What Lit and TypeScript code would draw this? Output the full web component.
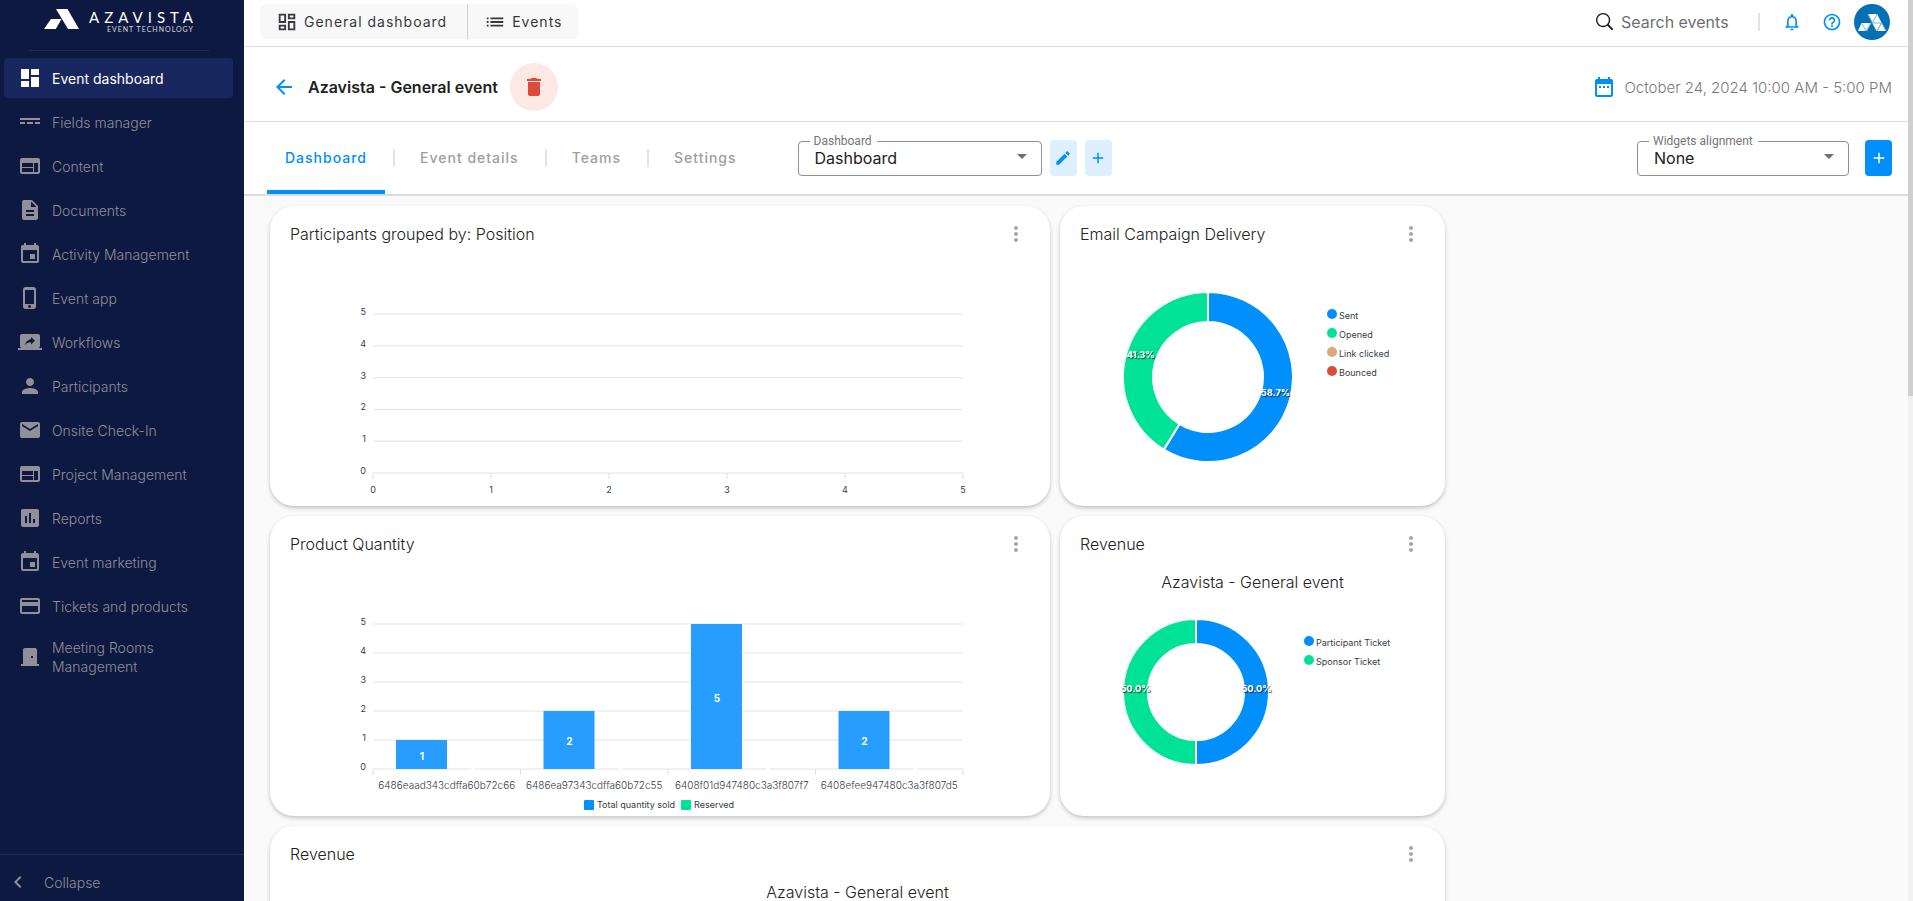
import { LitElement, html, svg, css, nothing } from "lit";
import { customElement, property } from "lit/decorators.js";
import { classMap } from "lit/directives/class-map.js";

const ICONS: Record<string, string> = {
  dashboard: "M3 13h8V3H3v10zm0 8h8v-6H3v6zm10 0h8V11h-8v10zm0-18v6h8V3h-8z",
  dashboardOutline:
    "M19 5v2h-4V5h4M9 5v6H5V5h4m10 8v6h-4v-6h4M9 17v2H5v-2h4M21 3h-8v6h8V3zM11 3H3v10h8V3zm10 8h-8v10h8V11zm-10 4H3v6h8v-6z",
  list: "M3 13h2v-2H3v2zm0 4h2v-2H3v2zm0-8h2V7H3v2zm4 4h14v-2H7v2zm0 4h14v-2H7v2zM7 7v2h14V7H7z",
  fields: "M2 8h20v2H2zM2 12h5v2H2zM9 12h6v2H9zM17 12h5v2h-5z",
  web: "M20 4H4c-1.1 0-1.99.9-1.99 2L2 18c0 1.1.9 2 2 2h16c1.1 0 2-.9 2-2V6c0-1.1-.9-2-2-2zm-5 14H4v-4h11v4zm0-5H4V9h11v4zm5 5h-4V9h4v9z",
  document:
    "M14 2H6c-1.1 0-1.99.9-1.99 2L4 20c0 1.1.89 2 1.99 2H18c1.1 0 2-.9 2-2V8l-6-6zm2 16H8v-2h8v2zm0-4H8v-2h8v2zm-3-5V3.5L18.5 9H13z",
  event:
    "M17 12h-5v5h5v-5zM16 1v2H8V1H6v2H5c-1.11 0-1.99.9-1.99 2L3 19c0 1.1.89 2 2 2h14c1.1 0 2-.9 2-2V5c0-1.1-.9-2-2-2h-1V1h-2zm3 18H5V8h14v11z",
  phone:
    "M15.5 1h-8C6.12 1 5 2.12 5 3.5v17C5 21.88 6.12 23 7.5 23h8c1.38 0 2.5-1.12 2.5-2.5v-17C18 2.12 16.88 1 15.5 1zm-4 21c-.83 0-1.5-.67-1.5-1.5s.67-1.5 1.5-1.5 1.5.67 1.5 1.5-.67 1.5-1.5 1.5zm4.5-4H7V4h9v14z",
  share:
    "M20 18c1.1 0 1.99-.9 1.99-2L22 6c0-1.11-.9-2-2-2H4c-1.11 0-2 .89-2 2v10c0 1.1.89 2 2 2H0v2h24v-2h-4zm-7-3.53v-2.19c-2.78 0-4.61.85-6 2.72.56-2.67 2.11-5.33 6-5.87V7l4 3.73-4 3.74z",
  person:
    "M12 12c2.21 0 4-1.79 4-4s-1.79-4-4-4-4 1.79-4 4 1.79 4 4 4zm0 2c-2.67 0-8 1.34-8 4v2h16v-2c0-2.66-5.33-4-8-4z",
  mail: "M20 4H4c-1.1 0-1.99.9-1.99 2L2 18c0 1.1.9 2 2 2h16c1.1 0 2-.9 2-2V6c0-1.1-.9-2-2-2zm0 4l-8 5-8-5V6l8 5 8-5v2z",
  report:
    "M19 3H5c-1.1 0-2 .9-2 2v14c0 1.1.9 2 2 2h14c1.1 0 2-.9 2-2V5c0-1.1-.9-2-2-2zM9 17H7v-7h2v7zm4 0h-2V7h2v10zm4 0h-2v-4h2v4z",
  card: "M20 4H4c-1.11 0-1.99.89-1.99 2L2 18c0 1.11.89 2 2 2h16c1.11 0 2-.89 2-2V6c0-1.11-.89-2-2-2zm0 14H4v-6h16v6zm0-10H4V6h16v2z",
  door: "M19 19V5c0-1.1-.9-2-2-2H7c-1.1 0-2 .9-2 2v14H3v2h18v-2h-2zm-4-6h-2v-2h2v2z",
  bell: "M12 22c1.1 0 2-.9 2-2h-4c0 1.1.9 2 2 2zm6-6v-5c0-3.07-1.63-5.64-4.5-6.32V4c0-.83-.67-1.5-1.5-1.5s-1.5.67-1.5 1.5v.68C7.64 5.36 6 7.92 6 11v5l-2 2v1h16v-1l-2-2zm-2 1H8v-6c0-2.48 1.51-4.5 4-4.5s4 2.02 4 4.5v6z",
  help: "M11 18h2v-2h-2v2zm1-16C6.48 2 2 6.48 2 12s4.48 10 10 10 10-4.48 10-10S17.52 2 12 2zm0 18c-4.41 0-8-3.59-8-8s3.59-8 8-8 8 3.59 8 8-3.59 8-8 8zm0-14c-2.21 0-4 1.79-4 4h2c0-1.1.9-2 2-2s2 .9 2 2c0 2-3 1.75-3 5h2c0-2.25 3-2.5 3-5 0-2.21-1.79-4-4-4z",
  calendar:
    "M9 11H7v2h2v-2zm4 0h-2v2h2v-2zm4 0h-2v2h2v-2zm2-7h-1V2h-2v2H8V2H6v2H5c-1.11 0-1.99.9-1.99 2L3 20c0 1.1.89 2 2 2h14c1.1 0 2-.9 2-2V6c0-1.1-.9-2-2-2zm0 16H5V9h14v11z",
  trash: "M6 19c0 1.1.9 2 2 2h8c1.1 0 2-.9 2-2V7H6v12zM19 4h-3.5l-1-1h-5l-1 1H5v2h14V4z",
  back: "M20 11H7.83l5.59-5.59L12 4l-8 8 8 8 1.41-1.41L7.83 13H20v-2z",
  edit: "M3 17.25V21h3.75L17.81 9.94l-3.75-3.75L3 17.25zM20.71 7.04c.39-.39.39-1.02 0-1.41l-2.34-2.34c-.39-.39-1.02-.39-1.41 0l-1.83 1.83 3.75 3.75 1.83-1.83z",
  plus: "M19 13h-6v6h-2v-6H5v-2h6V5h2v6h6v2z",
  chevron: "M15.41 7.41L14 6l-6 6 6 6 1.41-1.41L10.83 12z",
  more: "M12 8c1.1 0 2-.9 2-2s-.9-2-2-2-2 .9-2 2 .9 2 2 2zm0 2c-1.1 0-2 .9-2 2s.9 2 2 2 2-.9 2-2-.9-2-2-2zm0 6c-1.1 0-2 .9-2 2s.9 2 2 2 2-.9 2-2-.9-2-2-2z",
  search:
    "M7.5 0a7.5 7.5 0 1 0 4.55 13.46l4.6 4.6a1 1 0 0 0 1.41-1.41l-4.6-4.6A7.5 7.5 0 0 0 7.5 0zm0 1.4a6.1 6.1 0 1 1 0 12.2 6.1 6.1 0 0 1 0-12.2z",
};

const icon = (name: string, size = 24, box = 24) => html`
  <svg class="icon" width=${size} height=${size} viewBox="0 0 ${box} ${box}" aria-hidden="true">
    <path d=${ICONS[name]} fill="currentColor"></path>
  </svg>
`;

const reset = css`
  * {
    box-sizing: border-box;
  }
  button,
  input,
  select {
    font: inherit;
    color: inherit;
    margin: 0;
    padding: 0;
    border: 0;
    background: none;
  }
  a {
    color: inherit;
    text-decoration: none;
  }
  .icon {
    display: block;
    flex: none;
  }
`;

@customElement("app-sidebar")
export class AppSidebar extends LitElement {
  private items = [
    { icon: "dashboard", label: "Event dashboard", active: true },
    { icon: "fields", label: "Fields manager" },
    { icon: "web", label: "Content" },
    { icon: "document", label: "Documents" },
    { icon: "event", label: "Activity Management" },
    { icon: "phone", label: "Event app" },
    { icon: "share", label: "Workflows" },
    { icon: "person", label: "Participants" },
    { icon: "mail", label: "Onsite Check-In" },
    { icon: "web", label: "Project Management" },
    { icon: "report", label: "Reports" },
    { icon: "event", label: "Event marketing" },
    { icon: "card", label: "Tickets and products" },
    { icon: "door", label: "Meeting Rooms Management" },
  ];

  static styles = [
    reset,
    css`
      :host {
        display: flex;
        flex-direction: column;
        background: #0e1941;
        color: #8f9098;
        font-size: 14px;
        line-height: 19px;
        font-weight: 300;
      }
      .brand {
        display: flex;
        align-items: center;
        gap: 10px;
        height: 51px;
        margin: 0 35px 0 29px;
        padding: 0 15px 12px;
        border-bottom: 1px solid #1f2b57;
        color: #fff;
      }
      .words {
        display: flex;
        flex-direction: column;
        align-items: flex-end;
        font-family: Lato, sans-serif;
        padding-top: 4px;
      }
      .name {
        font-size: 15px;
        line-height: 15px;
        letter-spacing: 5px;
        margin-right: -5px;
        font-weight: 400;
      }
      .tag {
        font-size: 7px;
        line-height: 8px;
        letter-spacing: 1px;
        margin-right: -1px;
        font-weight: 400;
        opacity: 0.8;
      }
      nav {
        flex: 1;
        display: flex;
        flex-direction: column;
        gap: 4px;
        padding: 7px 11px 0 4px;
      }
      .item {
        display: flex;
        align-items: center;
        gap: 10px;
        min-height: 40px;
        padding: 8px 60px 8px 14px;
        border-radius: 4px;
      }
      .label {
        min-width: 0;
      }
      .item:not(.last) .label {
        white-space: nowrap;
      }
      .active {
        background: #18285f;
        color: #fff;
        font-weight: 400;
      }
      .collapse {
        display: flex;
        align-items: center;
        gap: 14px;
        height: 47px;
        padding: 8px 6px 0;
        border-top: 1px solid #1f2b57;
        text-align: left;
      }
    `,
  ];

  render() {
    return html`
      <div class="brand">
        <svg class="icon" width="35" height="20" viewBox="0 0 35 20" aria-hidden="true">
          <path d="M12 0h11.500l11.500 20h-11z" fill="#fff"></path>
          <path d="M7 10h10.500l-5.700 10H0z" fill="#fff"></path>
        </svg>
        <div class="words">
          <span class="name">AZAVISTA</span>
          <span class="tag">EVENT TECHNOLOGY</span>
        </div>
      </div>
      <nav>
        ${this.items.map(
          (item, i) => html`
            <a
              href="#"
              class=${classMap({ item: true, active: !!item.active, last: i === this.items.length - 1 })}
            >
              ${icon(item.icon)}<span class="label">${item.label}</span>
            </a>
          `,
        )}
      </nav>
      <button class="collapse" type="button">${icon("chevron")}<span>Collapse</span></button>
    `;
  }
}

@customElement("outlined-select")
export class OutlinedSelect extends LitElement {
  @property() label = "";
  @property() value = "";

  static styles = [
    reset,
    css`
      :host {
        display: block;
        position: relative;
      }
      label {
        position: absolute;
        top: -7px;
        left: 12px;
        padding: 0 5px 0 4px;
        background: #fff;
        color: #757575;
        font-family: Roboto, sans-serif;
        font-size: 12px;
        line-height: 14px;
        white-space: nowrap;
      }
      select {
        display: block;
        appearance: none;
        width: 100%;
        height: 35px;
        padding: 0 32px 0 16px;
        border: 1px solid #8f8f8f;
        border-radius: 4px;
        color: #212121;
        font-size: 16px;
      }
      .caret {
        position: absolute;
        top: 13px;
        right: 15px;
        pointer-events: none;
      }
    `,
  ];

  render() {
    return html`
      <select id="field">
        <option>${this.value}</option>
      </select>
      <label for="field">${this.label}</label>
      <svg class="caret" width="10" height="5" viewBox="0 0 10 5" aria-hidden="true">
        <path d="M0 0h10L5 5z" fill="#6f6f6f"></path>
      </svg>
    `;
  }
}

@customElement("widget-card")
export class WidgetCard extends LitElement {
  @property() heading = "";
  @property() caption = "";

  static styles = [
    reset,
    css`
      :host {
        display: flex;
        flex-direction: column;
        min-width: 0;
        background: #fff;
        border-radius: 24px;
        box-shadow: 0 2px 4px rgba(0, 0, 0, 0.22);
        color: #212121;
        font-size: 16px;
        font-weight: 300;
      }
      header {
        display: flex;
        align-items: center;
        justify-content: space-between;
        flex: none;
        height: 56px;
        padding: 0 22px 0 20px;
      }
      h2,
      h3 {
        margin: 0;
        font: inherit;
        line-height: 20px;
      }
      h3 {
        text-align: center;
      }
      .more {
        color: #a6a6a6;
      }
      .body {
        flex: 1;
        min-height: 0;
      }
    `,
  ];

  render() {
    return html`
      <header>
        <h2>${this.heading}</h2>
        <button class="more" type="button" aria-label="Widget menu">${icon("more")}</button>
      </header>
      ${this.caption ? html`<h3>${this.caption}</h3>` : nothing}
      <div class="body"><slot></slot></div>
    `;
  }
}

const chartStyles = css`
  :host {
    display: block;
    height: 100%;
  }
  svg {
    display: block;
    width: 100%;
    height: 100%;
  }
  .axis,
  .legend {
    font-size: 9px;
    font-weight: 400;
    fill: #373d3f;
  }
  .category {
    font-size: 10px;
    fill: #373d3f;
  }
  .value {
    font-size: 10px;
    font-weight: 700;
    fill: #fff;
    text-anchor: middle;
  }
  .percent {
    font-size: 9px;
    font-weight: 800;
    fill: #fff;
    text-anchor: middle;
    text-shadow: 1px 1px 1px rgba(0, 0, 0, 0.7);
  }
  .end {
    text-anchor: end;
  }
  .middle {
    text-anchor: middle;
  }
`;

const PLOT = { left: 103, right: 693 };

@customElement("column-chart")
export class ColumnChart extends LitElement {
  @property({ type: Array }) ticks: string[] = [];
  @property({ type: Array }) categories: string[] = [];
  @property({ type: Array }) values: number[] = [];
  @property({ type: Array }) series: { label: string; color: string; x: number }[] = [];
  @property({ type: Number }) base = 211;
  @property({ type: Number }) top = 52;

  static styles = chartStyles;

  render() {
    const { left, right } = PLOT;
    const step = (this.base - this.top) / 5;
    const slots = this.categories.length || this.ticks.length - 1;
    const slot = (right - left) / slots;
    return html`
      <svg viewBox="0 0 780 244" role="img" aria-label="Column chart">
        ${[0, 1, 2, 3, 4, 5].map((n) => {
          const y = this.base - n * step;
          return svg`
            <line x1=${left} x2=${right} y1=${y} y2=${y} stroke="#e3e3e3" stroke-width="1"></line>
            <text class="axis end" x="96" y=${y + 1}>${n}</text>`;
        })}
        ${Array.from({ length: slots + 1 }, (_, i) => {
          const x = left + i * slot;
          return svg`<line x1=${x} x2=${x} y1=${this.base} y2=${this.base + 6} stroke="#e0e0e0"></line>`;
        })}
        ${this.ticks.map(
          (t, i) => svg`<text class="axis middle" x=${left + i * slot} y=${this.base + 20}>${t}</text>`,
        )}
        ${this.categories.map((c, i) => {
          const x = left + i * slot + 23;
          const h = this.values[i] * step;
          return svg`
            <rect x=${x} y=${this.base - h} width="51" height=${h} fill="#269dff"></rect>
            <ellipse cx=${x + 77} cy=${this.base} rx="2" ry="1" fill="#fff"></ellipse>
            <text class="value" x=${x + 26} y=${this.base - h / 2 + 5}>${this.values[i]}</text>
            <text class="category middle" x=${left + (i + 0.5) * slot} y=${this.base + 20}>${c}</text>`;
        })}
        ${this.series.map(
          (s) => svg`
            <rect x=${s.x} y="228" width="10" height="10" rx="1" fill=${s.color}></rect>
            <text class="legend" x=${s.x + 13} y="236">${s.label}</text>`,
        )}
      </svg>
    `;
  }
}

@customElement("donut-chart")
export class DonutChart extends LitElement {
  @property({ type: Array }) slices: { share: number; color: string }[] = [];
  @property({ type: Array }) legend: { label: string; color: string }[] = [];
  @property({ type: Number }) height = 244;
  @property({ type: Number }) cx = 148;
  @property({ type: Number }) cy = 115;
  @property({ type: Number }) radius = 85;
  @property({ type: Number }) hole = 55;
  @property({ type: Number }) legendX = 272;

  static styles = chartStyles;

  private point(angle: number, r: number) {
    const a = ((angle - 90) * Math.PI) / 180;
    return [this.cx + r * Math.cos(a), this.cy + r * Math.sin(a)];
  }

  render() {
    let start = 0;
    const parts = this.slices.map((s) => {
      const from = start;
      const to = start + s.share * 3.6;
      start = to;
      const large = to - from > 180 ? 1 : 0;
      const [ax, ay] = this.point(from, this.radius);
      const [bx, by] = this.point(to, this.radius);
      const [dx, dy] = this.point(to, this.hole);
      const [ex, ey] = this.point(from, this.hole);
      const [tx, ty] = this.point((from + to) / 2, (this.radius + this.hole) / 2);
      return {
        ...s,
        tx,
        ty,
        d: `M${ax} ${ay}A${this.radius} ${this.radius} 0 ${large} 1 ${bx} ${by}L${dx} ${dy}A${this.hole} ${this.hole} 0 ${large} 0 ${ex} ${ey}Z`,
      };
    });
    return html`
      <svg viewBox="0 0 385 ${this.height}" role="img" aria-label="Donut chart">
        ${parts.map((p) => svg`<path d=${p.d} fill=${p.color} stroke="#fff" stroke-width="2"></path>`)}
        ${parts.map((p) => svg`<text class="percent" x=${p.tx} y=${p.ty}>${p.share.toFixed(1)}%</text>`)}
        ${this.legend.map((l, i) => {
          const y = this.cy - this.radius + 22 + i * 19;
          return svg`
            <circle cx=${this.legendX} cy=${y} r="5" fill=${l.color}></circle>
            <text class="legend" x=${this.legendX + 7} y=${y + 5}>${l.label}</text>`;
        })}
      </svg>
    `;
  }
}

@customElement("app-root")
export class AppRoot extends LitElement {
  static styles = [
    reset,
    css`
      :host {
        display: grid;
        grid-template-columns: 244px minmax(0, 1fr) 5px;
        height: 100vh;
        overflow: hidden;
        background: #fafafa;
        color: #212121;
        font-family: Inter, "Liberation Sans", sans-serif;
        font-size: 16px;
      }
      main {
        display: flex;
        flex-direction: column;
        min-width: 0;
        min-height: 0;
      }
      .bar {
        display: flex;
        align-items: center;
        justify-content: space-between;
        flex: none;
        padding: 0 16px;
        background: #fff;
        border-bottom: 1px solid #dcdcdc;
      }
      .group {
        display: flex;
        align-items: center;
      }
      .grow {
        flex: 1;
      }
      .top {
        height: 47px;
        padding: 0 18px 3px 16px;
      }
      .switch {
        display: flex;
        height: 35px;
        background: #f8f8f8;
        border-radius: 6px;
        overflow: hidden;
        font-size: 14px;
        letter-spacing: 1px;
        color: #37383c;
      }
      .switch a {
        display: flex;
        align-items: center;
        gap: 6px;
        padding: 0 20px 0 16px;
      }
      .switch a + a {
        border-left: 1px solid #cfcfcf;
        padding-right: 16px;
      }
      .search {
        display: flex;
        align-items: center;
        gap: 8px;
      }
      .search .icon {
        color: #17182b;
      }
      .search input {
        width: 137px;
        outline: 0;
      }
      .search input::placeholder {
        color: #6f6f6f;
        opacity: 1;
      }
      .rule {
        width: 2px;
        height: 18px;
        background: #e4e4e4;
      }
      .tools {
        display: flex;
        align-items: center;
        gap: 20px;
        margin-left: 22px;
        color: #008ffb;
      }
      .avatar {
        display: block;
        margin-left: 12px;
      }
      .title {
        height: 75px;
        padding-top: 6px;
        padding-left: 28px;
      }
      h1 {
        margin: 0 12px;
        font-size: 16px;
        font-weight: 600;
      }
      .backlink {
        color: #008ffb;
      }
      .delete {
        display: grid;
        place-items: center;
        width: 48px;
        height: 48px;
        border-radius: 50%;
        background: #fce8e5;
        color: #dd4b39;
      }
      .when {
        display: flex;
        align-items: center;
        gap: 8px;
        color: #7a7a7a;
        font-size: 15px;
        font-weight: 300;
      }
      .when .icon {
        color: #008ffb;
      }
      .tabsbar {
        height: 74px;
        padding-left: 23px;
        border-bottom: 2px solid #dcdcdc;
      }
      .tabs {
        display: flex;
        align-items: center;
        align-self: stretch;
        font-size: 14px;
        font-weight: 500;
        letter-spacing: 1px;
        color: #9e9e9e;
      }
      .tabs a {
        display: flex;
        align-items: center;
        align-self: stretch;
        padding: 2px 18px 0 18px;
        border-bottom: 4px solid transparent;
      }
      .tabs .on {
        color: #008ffb;
        border-color: #008ffb;
      }
      .tabs .rule {
        margin: 0 7px 0 8px;
      }
      .views {
        width: 244px;
        margin-left: 43px;
      }
      .align {
        width: 212px;
        margin-right: 16px;
      }
      .square {
        display: grid;
        place-items: center;
        width: 27px;
        height: 36px;
        margin-left: 8px;
        border-radius: 4px;
        background: #def0fe;
        color: #008ffb;
      }
      .solid {
        margin-left: 0;
        background: #008ffb;
        color: #fff;
      }
      .board {
        display: grid;
        grid-template-columns: repeat(4, minmax(0, 1fr));
        grid-auto-rows: 300px;
        gap: 10px;
        flex: 1;
        min-height: 0;
        padding: 10px 68px 10px 26px;
        overflow: hidden;
      }
      .two {
        grid-column: 1 / span 2;
      }
      .three {
        grid-column: 1 / span 3;
      }
      .track {
        background: #f1f1f1;
      }
      .thumb {
        height: 44%;
        background: #cfcfcf;
      }
    `,
  ];

  render() {
    const blue = "#008ffb";
    const green = "#00e396";
    return html`
      <app-sidebar></app-sidebar>
      <main>
        <div class="bar top">
          <nav class="switch">
            <a href="#">${icon("dashboardOutline", 22)}<span>General dashboard</span></a>
            <a href="#">${icon("list", 22)}<span>Events</span></a>
          </nav>
          <div class="group">
            <label class="search">
              ${icon("search", 17, 18)}
              <input type="text" placeholder="Search events" aria-label="Search events" />
            </label>
            <span class="rule"></span>
            <div class="tools">
              <button type="button" aria-label="Notifications">${icon("bell", 20)}</button>
              <button type="button" aria-label="Help">${icon("help", 20)}</button>
            </div>
            <svg class="avatar" width="36" height="36" viewBox="0 0 36 36" role="img" aria-label="Account">
              <circle cx="18" cy="18" r="18" fill="#0570b5"></circle>
              <path
                d="M14 10h9l9 17H22.500L18.500 19.500zM7.500 19h9.500l-4 8H4z"
                fill="#fff"
              ></path>
              <path
                d="M23 10l-4.500 9h9L23 27M27.500 19L23 27M14 10l4.500 9M27.500 19L32 27M7.500 19l4.500 8L17 19"
                fill="none"
                stroke="#7fb4d8"
                stroke-width="1"
              ></path>
            </svg>
          </div>
        </div>

        <div class="bar title">
          <div class="group">
            <a class="backlink" href="#" aria-label="Back">${icon("back")}</a>
            <h1>Azavista - General event</h1>
            <button class="delete" type="button" aria-label="Delete event">${icon("trash")}</button>
          </div>
          <div class="when">${icon("calendar")}<span>October 24, 2024 10:00 AM - 5:00 PM</span></div>
        </div>

        <div class="bar tabsbar">
          <nav class="tabs">
            <a class="on" href="#">Dashboard</a><span class="rule"></span>
            <a href="#">Event details</a><span class="rule"></span>
            <a href="#">Teams</a><span class="rule"></span>
            <a href="#">Settings</a>
          </nav>
          <div class="group grow">
            <outlined-select class="views" label="Dashboard" value="Dashboard"></outlined-select>
            <button class="square" type="button" aria-label="Edit dashboard">${icon("edit", 18)}</button>
            <button class="square" type="button" aria-label="Add dashboard">${icon("plus", 18)}</button>
          </div>
          <div class="group">
            <outlined-select class="align" label="Widgets alignment" value="None"></outlined-select>
            <button class="square solid" type="button" aria-label="Add widget">${icon("plus", 18)}</button>
          </div>
        </div>

        <section class="board">
          <widget-card class="two" heading="Participants grouped by: Position">
            <column-chart .ticks=${["0", "1", "2", "3", "4", "5"]}></column-chart>
          </widget-card>
          <widget-card heading="Email Campaign Delivery">
            <donut-chart
              .slices=${[
                { share: 58.7, color: blue },
                { share: 41.3, color: green },
              ]}
              .legend=${[
                { label: "Sent", color: blue },
                { label: "Opened", color: green },
                { label: "Link clicked", color: "#dba975" },
                { label: "Bounced", color: "#dd4b39" },
              ]}
            ></donut-chart>
          </widget-card>
          <widget-card class="two" heading="Product Quantity">
            <column-chart
              .top=${52}
              .base=${197}
              .categories=${[
                "6486eaad343cdffa60b72c66",
                "6486ea97343cdffa60b72c55",
                "6408f01d947480c3a3f807f7",
                "6408efee947480c3a3f807d5",
              ]}
              .values=${[1, 2, 5, 2]}
              .series=${[
                { label: "Total quantity sold", color: blue, x: 314 },
                { label: "Reserved", color: green, x: 411 },
              ]}
            ></column-chart>
          </widget-card>
          <widget-card heading="Revenue" caption="Azavista - General event">
            <donut-chart
              .height=${224}
              .cx=${136}
              .cy=${100}
              .radius=${73}
              .hole=${48}
              .legendX=${249}
              .slices=${[
                { share: 50, color: blue },
                { share: 50, color: green },
              ]}
              .legend=${[
                { label: "Participant Ticket", color: blue },
                { label: "Sponsor Ticket", color: green },
              ]}
            ></donut-chart>
          </widget-card>
          <widget-card class="three" heading="Revenue" caption="Azavista - General event"></widget-card>
        </section>
      </main>
      <div class="track"><div class="thumb"></div></div>
    `;
  }
}
